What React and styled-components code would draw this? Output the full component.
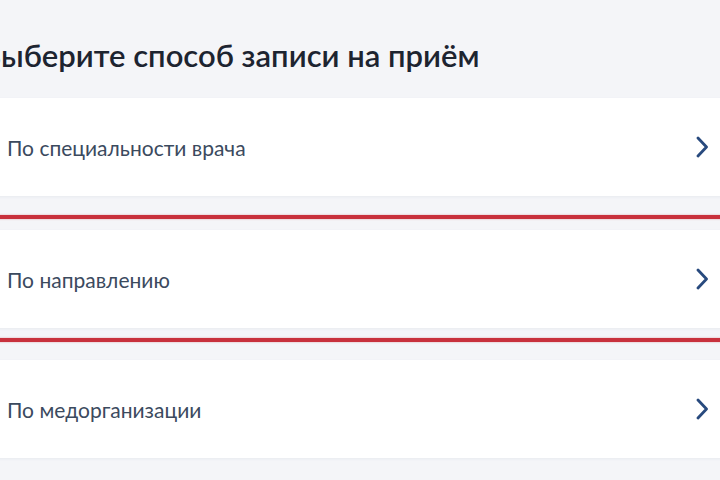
import React from "react";
import styled, { createGlobalStyle } from "styled-components";

const Global = createGlobalStyle`
  html, body {
    margin: 0;
    padding: 0;
    background: #f4f5f8;
    overflow: hidden;
  }
  body {
    font-family: Lato, "Noto Sans", sans-serif;
  }
`;

const Page = styled.div`
  width: 760px;
  height: 480px;
  margin-left: -20px;
  padding-top: 35px;
  box-sizing: border-box;
`;

const Title = styled.h1`
  margin: 0 0 0 1px;
  font-size: 31px;
  font-weight: 600;
  line-height: 40px;
  color: #1d2430;
  white-space: nowrap;
`;

const List = styled.div`
  margin-top: 23px;
  display: flex;
  flex-direction: column;
`;

const Card = styled.a`
  display: flex;
  align-items: center;
  justify-content: space-between;
  height: 98px;
  padding: 0 32px 0 27px;
  background: #ffffff;
  box-shadow: 0 1px 3px rgba(40, 60, 100, 0.06);
  text-decoration: none;
  cursor: pointer;
`;

const Label = styled.span`
  font-size: 21px;
  color: #3b4a5e;
`;

const Divider = styled.div`
  height: 4px;
  background: #c8313c;
  box-shadow: 0 0 2px rgba(200, 49, 60, 0.45);
  margin: ${({ $before, $after }) => `${$before}px 0 ${$after}px`};
`;

const Chevron = () => (
  <svg width="12" height="22" viewBox="0 0 12 22" fill="none">
    <path
      d="M2 2l8.5 9-8.5 9"
      stroke="#284a7e"
      strokeWidth="2.8"
      strokeLinecap="round"
      strokeLinejoin="round"
    />
  </svg>
);

const options = [
  "По специальности врача",
  "По направлению",
  "По медорганизации",
];

export default function App() {
  return (
    <Page>
      <Global />
      <Title>Выберите способ записи на приём</Title>
      <List>
        {options.map((o, i) => (
          <React.Fragment key={o}>
            <Card>
              <Label>{o}</Label>
              <Chevron />
            </Card>
            {i === 0 && <Divider $before={19} $after={11} />}
            {i === 1 && <Divider $before={10} $after={18} />}
          </React.Fragment>
        ))}
      </List>
    </Page>
  );
}
